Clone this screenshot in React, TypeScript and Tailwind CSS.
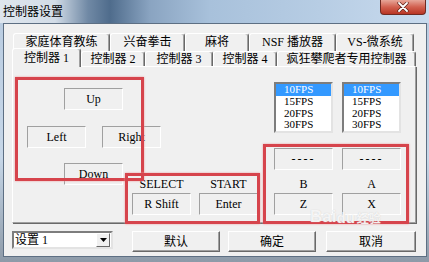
import type { ReactNode } from 'react';

const backTabs = [
  { label: '家庭体育教练', w: 'w-[97px]' },
  { label: '兴奋拳击', w: 'w-[75px]' },
  { label: '麻将', w: 'w-[64px]' },
  { label: 'NSF 播放器', w: 'w-[87px]' },
  { label: 'VS-微系统', w: 'w-[78px]' },
];

const frontTabs = [
  { label: '控制器 2', w: 'w-[64px]' },
  { label: '控制器 3', w: 'w-[68px]' },
  { label: '控制器 4', w: 'w-[64px]' },
  { label: '疯狂攀爬者专用控制器', w: 'w-[139px]' },
];

function Key({ children, className = '' }: { children: ReactNode; className?: string }) {
  return (
    <div
      className={`flex h-[22px] w-[59px] shrink-0 items-center justify-center border border-t-[#a0a0a0] border-l-[#a0a0a0] border-r-white border-b-white leading-none ${className}`}
    >
      {children}
    </div>
  );
}

function Label({ children }: { children: ReactNode }) {
  return <div className="flex h-[14px] items-center justify-center leading-none">{children}</div>;
}

function FpsList() {
  return (
    <div className="h-[51px] w-[59px] overflow-hidden border-2 border-t-[#7d7d7d] border-l-[#7d7d7d] border-r-[#e3e3e3] border-b-[#e3e3e3] bg-white text-[11px]">
      {['10FPS', '15FPS', '20FPS', '30FPS'].map((f, i) => (
        <div
          key={f}
          className={`h-[11.75px] pl-[8px] leading-[11.75px] ${i === 0 ? 'bg-[#3399ff] text-white' : ''}`}
        >
          {f}
        </div>
      ))}
    </div>
  );
}

function Button({ children, w }: { children: ReactNode; w: string }) {
  return (
    <div
      className={`${w} flex h-[21px] items-center justify-center border border-t-white border-l-white border-r-[#696969] border-b-[#696969] bg-[#f0f0f0] leading-none shadow-[inset_-1px_-1px_0_#a0a0a0]`}
    >
      {children}
    </div>
  );
}

export default function App() {
  return (
    <div className="relative h-[262px] w-[429px] overflow-hidden bg-[linear-gradient(180deg,#b8cbe0,#c7d7e8_60%,#8d9aa8)] font-['Liberation_Serif','Noto_Sans_CJK_SC',serif] text-[12px] text-black">
      {/* title bar */}
      <div className="flex h-[23px] items-start justify-between bg-[linear-gradient(90deg,#dfe6ee_0px,#d2dce7_55px,#7089a5_88px,#4f6c8c_110px,#8aa4c1_150px,#a8c1db_210px,#b7cde4_320px,#c9dbee_429px)]">
        <span className="pl-[3px] pt-[3px] font-['Noto_Sans_CJK_SC',sans-serif] text-[12px] leading-[16px] text-black">
          控制器设置
        </span>
        <div className="mr-[3px] flex h-[15px] w-[46px] items-center justify-center rounded-b-[4px] border border-t-0 border-[#6f2a22] bg-[linear-gradient(180deg,#e7a699,#d2604f_50%,#b83524)]">
          <svg width="12" height="10" viewBox="0 0 12 10">
            <path d="M2 1 L10 9 M10 1 L2 9" stroke="#5a1e16" strokeWidth="3.2" strokeLinecap="round" />
            <path d="M2 1 L10 9 M10 1 L2 9" stroke="#ffffff" strokeWidth="1.8" strokeLinecap="round" />
          </svg>
        </div>
      </div>

      {/* client area */}
      <div className="ml-[3px] h-[234px] w-[424px] border border-[#5d6f83] bg-[#f0f0f0] pt-[9px]">
        {/* back tab row */}
        <div className="ml-[9px] flex h-[18px]">
          {backTabs.map((t) => (
            <div
              key={t.label}
              className={`${t.w} flex h-[18px] justify-center rounded-t-[3px] border border-b-0 border-t-white border-l-white border-r-[#696969] pt-[1px] leading-[14px] shadow-[inset_-1px_0_0_#a0a0a0]`}
            >
              {t.label}
            </div>
          ))}
        </div>
        {/* front tab row */}
        <div className="relative z-10 -mt-[3px] ml-[8px] flex h-[18px] items-end">
          <div className="-mb-[1px] flex h-[19px] w-[69px] justify-center rounded-t-[3px] border border-b-0 border-t-white border-l-white border-r-[#696969] bg-[#f0f0f0] pt-[2px] leading-[14px] shadow-[inset_-1px_0_0_#a0a0a0]">
            控制器 1
          </div>
          {frontTabs.map((t) => (
            <div
              key={t.label}
              className={`${t.w} flex h-[15px] justify-center rounded-t-[3px] border border-b-0 border-t-white border-l-white border-r-[#696969] bg-[#f0f0f0] leading-[14px] shadow-[inset_-1px_0_0_#a0a0a0]`}
            >
              {t.label}
            </div>
          ))}
        </div>

        {/* tab panel */}
        <div className="ml-[8px] h-[157px] w-[404px] border border-t-white border-l-white border-r-[#a0a0a0] border-b-[#a0a0a0] shadow-[1px_1px_0_#696969]">
          <div className="flex h-[81px]">
            <div className="ml-[14px] w-[134px]">
              <Key className="ml-[37px] mt-[21px]">Up</Key>
              <div className="mt-[16px] flex gap-[16px]">
                <Key>Left</Key>
                <Key>Right</Key>
              </div>
            </div>
            <div className="ml-auto mr-[14px] mt-[15px] flex gap-[9px]">
              <FpsList />
              <FpsList />
            </div>
          </div>
          <div className="flex">
            <Key className="ml-[51px] mt-[15px]">Down</Key>
            <div className="ml-[9px] flex gap-[8px]">
              {[
                ['SELECT', 'R Shift'],
                ['START', 'Enter'],
              ].map(([label, key]) => (
                <div key={label} className="w-[59px] pt-[29px]">
                  <Label>{label}</Label>
                  <Key className="mt-[2px] h-[21px]">{key}</Key>
                </div>
              ))}
            </div>
            <div className="ml-auto mr-[14px] flex gap-[9px]">
              {[
                ['B', 'Z'],
                ['A', 'X'],
              ].map(([label, key]) => (
                <div key={label} className="w-[59px]">
                  <Key className="tracking-[2px]">----</Key>
                  <div className="mt-[7px]">
                    <Label>{label}</Label>
                  </div>
                  <Key className="mt-[2px]">{key}</Key>
                </div>
              ))}
            </div>
          </div>
        </div>

        {/* bottom row */}
        <div className="ml-[8px] mt-[8px] flex items-start">
          <div className="flex h-[18px] w-[101px] items-center justify-between border-2 border-t-[#7d7d7d] border-l-[#7d7d7d] border-r-[#e3e3e3] border-b-[#e3e3e3] bg-white pr-[1px]">
            <span className="pl-[1px] leading-none">设置 1</span>
            <div className="flex h-[14px] w-[14px] items-center justify-center border border-t-white border-l-white border-r-[#696969] border-b-[#696969] bg-[#f0f0f0]">
              <svg width="7" height="4" viewBox="0 0 7 4">
                <path d="M0 0 H7 L3.5 4 Z" fill="#000" />
              </svg>
            </div>
          </div>
          <div className="ml-[19px]">
            <Button w="w-[88px]">默认</Button>
          </div>
          <div className="ml-[8px]">
            <Button w="w-[88px]">确定</Button>
          </div>
          <div className="ml-[10px]">
            <Button w="w-[90px]">取消</Button>
          </div>
        </div>
      </div>

      {/* annotation overlays */}
      <div className="pointer-events-none absolute left-[15px] top-[77px] h-[104px] w-[129px] border-[3px] border-[#d6444c] shadow-[0_0_2px_#ec9ca0]" />
      <div className="pointer-events-none absolute left-[125px] top-[173px] h-[51px] w-[135px] border-[3px] border-[#d6444c] shadow-[0_0_2px_#ec9ca0]" />
      <div className="pointer-events-none absolute left-[263px] top-[144px] h-[80px] w-[146px] border-[3px] border-[#d6444c] shadow-[0_0_2px_#ec9ca0]" />

      {/* watermark */}
      <div className="pointer-events-none absolute left-[310px] top-[208px] flex items-end font-['Liberation_Sans','Noto_Sans_CJK_SC',sans-serif] font-bold text-white/80 [text-shadow:0_0_1px_#c4c4c4]">
        <span className="text-[17px] leading-none">Bai</span>
        <span className="text-[15px] leading-none">du</span>
        <span className="ml-[2px] text-[12px] leading-none">经验</span>
      </div>
    </div>
  );
}
